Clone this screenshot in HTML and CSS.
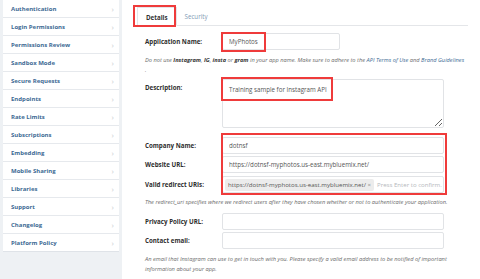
FILE: index.html
```html
<!DOCTYPE html>
<html lang="en">
<head>
    <meta charset="UTF-8">
    <title>Edit Client - Instagram Developer</title>
    <link rel="stylesheet" href="styles.css">
</head>
<body>
    <div class="page">
        <!-- Sidebar -->
        <div class="sidebar">
            <ul class="nav">
                <li><a href="#">Authentication</a><span class="chev">&rsaquo;</span></li>
                <li><a href="#">Login Permissions</a><span class="chev">&rsaquo;</span></li>
                <li><a href="#">Permissions Review</a><span class="chev">&rsaquo;</span></li>
                <li><a href="#">Sandbox Mode</a><span class="chev">&rsaquo;</span></li>
                <li><a href="#">Secure Requests</a><span class="chev">&rsaquo;</span></li>
                <li><a href="#">Endpoints</a><span class="chev">&rsaquo;</span></li>
                <li><a href="#">Rate Limits</a><span class="chev">&rsaquo;</span></li>
                <li><a href="#">Subscriptions</a><span class="chev">&rsaquo;</span></li>
                <li><a href="#">Embedding</a><span class="chev">&rsaquo;</span></li>
                <li><a href="#">Mobile Sharing</a><span class="chev">&rsaquo;</span></li>
                <li><a href="#">Libraries</a><span class="chev">&rsaquo;</span></li>
                <li><a href="#">Support</a><span class="chev">&rsaquo;</span></li>
                <li><a href="#">Changelog</a><span class="chev">&rsaquo;</span></li>
                <li><a href="#">Platform Policy</a><span class="chev">&rsaquo;</span></li>
            </ul>
        </div>

        <!-- Main form -->
        <div class="main">
            <div class="tabs">
                <span class="tab active">Details</span>
                <span class="tab">Security</span>
            </div>

            <div class="row first">
                <label class="label">Application Name:</label>
                <input type="text" class="input short" value="MyPhotos">
            </div>
            <div class="help">
                Do not use <b>Instagram</b>, <b>IG</b>, <b>insta</b> or <b>gram</b> in your app name. Make sure to adhere to the <a href="#">API Terms of Use</a> and <a href="#">Brand Guidelines</a><br>.
            </div>

            <div class="row desc">
                <label class="label">Description:</label>
                <textarea class="input area">Training sample for Instagram API</textarea>
            </div>

            <div class="row company">
                <label class="label">Company Name:</label>
                <input type="text" class="input" value="dotnsf">
            </div>
            <div class="row tight">
                <label class="label">Website URL:</label>
                <input type="text" class="input" value="https://dotnsf-myphotos.us-east.mybluemix.net/">
            </div>
            <div class="row redirect">
                <label class="label">Valid redirect URIs:</label>
                <div class="input tags">
                    <span class="tag">https://dotnsf-myphotos.us-east.mybluemix.net/ <span class="x">&times;</span></span>
                    <span class="placeholder">Press Enter to confirm.</span>
                </div>
            </div>
            <div class="help help-redirect">
                The redirect_uri specifies where we redirect users after they have chosen whether or not to authenticate your application.
            </div>

            <div class="row privacy">
                <label class="label">Privacy Policy URL:</label>
                <input type="text" class="input">
            </div>
            <div class="row tight">
                <label class="label">Contact email:</label>
                <input type="text" class="input">
            </div>
            <div class="help help-email">
                An email that Instagram can use to get in touch with you. Please specify a valid email address to be notified of important information about your app.
            </div>
        </div>

        <!-- annotation boxes -->
        <div class="mark mark-tab"></div>
        <div class="mark mark-name"></div>
        <div class="mark mark-desc"></div>
        <div class="mark mark-group"></div>
    </div>
</body>
</html>
```

FILE: styles.css
```css
body {
    margin: 0;
    font-family: "Open Sans", Arial, sans-serif;
    background: #ffffff;
    color: #333333;
}

.page {
    position: relative;
    display: flex;
    width: 480px;
    height: 279px;
    overflow: hidden;
}

/* Sidebar */
.sidebar {
    width: 116px;
    padding: 0 3px;
    background: #eef1f4;
    flex-shrink: 0;
}

.nav {
    list-style: none;
    margin: 0;
    padding: 0;
    background: white;
    border-bottom: 1px solid #dfe3e8;
}

.nav li {
    display: flex;
    align-items: center;
    justify-content: space-between;
    height: 17px;
    padding: 0 5px 0 8px;
    border-bottom: 1px solid #e6e9ed;
}

.nav li:last-child {
    border-bottom: none;
}

.nav a {
    font-size: 6px;
    font-weight: bold;
    color: #3d6a94;
    text-decoration: none;
}

.chev {
    color: #c8ccd2;
    font-size: 8px;
}

/* Main */
.main {
    flex: 1;
    padding: 7px 0 0 23px;
}

.tabs {
    display: flex;
    height: 18px;
    margin-left: -8px;
    margin-right: 12px;
    border-bottom: 1px solid #e4e6e9;
}

.tab {
    padding: 0 8px;
    font-size: 6.2px;
    line-height: 19px;
    color: #7f9bb5;
}

.tab.active {
    font-weight: bold;
    color: #333333;
    background: white;
    border: 1px solid #e4e6e9;
    border-bottom: 1px solid white;
    margin-bottom: -1px;
}

.row {
    display: grid;
    grid-template-columns: 77px 222px;
    align-items: start;
}

.row.first { margin-top: 7px; }
.row.desc { margin-top: 4px; }
.row.company { margin-top: 9px; }
.row.tight { margin-top: 2px; }
.row.redirect { margin-top: 3px; }
.row.privacy { margin-top: 6px; }

.label {
    font-size: 6.2px;
    font-weight: bold;
    line-height: 17px;
    color: #2e2e2e;
}

.input {
    box-sizing: border-box;
    height: 17px;
    width: 222px;
    margin: 0;
    padding: 0 6px;
    border: 1px solid #e1e3e6;
    border-radius: 2px;
    font-family: "Open Sans", Arial, sans-serif;
    font-size: 6.2px;
    color: #555555;
    background: white;
    outline: none;
}

.input.short {
    width: 118px;
}

.input.area {
    height: 49px;
    padding: 5px 6px;
    resize: vertical;
    line-height: 9px;
}

.tags {
    display: flex;
    align-items: center;
    gap: 3px;
    padding: 0 2px;
    overflow: hidden;
}

.tag {
    background: #ececec;
    border-radius: 2px;
    padding: 1px 3px;
    font-size: 6.1px;
    line-height: 10px;
    white-space: nowrap;
    color: #555555;
}

.tag .x {
    color: #888888;
}

.placeholder {
    font-size: 6.1px;
    color: #b5b8bc;
    white-space: nowrap;
}

.help {
    width: 330px;
    margin-top: 5px;
    font-size: 5.7px;
    line-height: 10px;
    font-style: italic;
    color: #6a6a6a;
}

.help b {
    color: #333333;
}

.help a {
    color: #3d6a94;
    text-decoration: none;
}

.help-redirect { margin-top: 4px; }

.help-email {
    width: 304px;
    margin-top: 5px;
}

/* Annotation boxes laid over the form */
.mark {
    position: absolute;
    box-sizing: border-box;
    border: 2px solid #ef3b3b;
}

.mark-tab { left: 133px; top: 5px; width: 43px; height: 22px; }
.mark-name { left: 221px; top: 32px; width: 45px; height: 20px; }
.mark-desc { left: 221px; top: 77px; width: 112px; height: 24px; }
.mark-group { left: 221px; top: 133px; width: 226px; height: 62px; }
```
